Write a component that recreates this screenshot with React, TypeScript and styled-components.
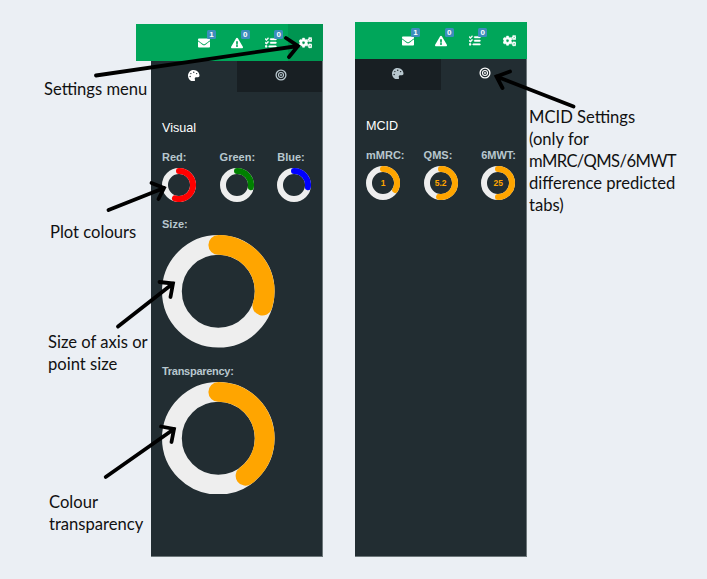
import React from "react";
import styled, { createGlobalStyle } from "styled-components";
import { FaEnvelope, FaExclamationTriangle, FaCogs, FaPalette } from "react-icons/fa";
import { FaListCheck } from "react-icons/fa6";

const GlobalStyle = createGlobalStyle`
  *, *::before, *::after { box-sizing: border-box; }
  body { margin: 0; background: #ebeff4; font-family: "Liberation Sans", Arial, sans-serif; }
`;

const Stage = styled.main`
  position: relative;
  width: 707px;
  height: 579px;
  overflow: hidden;
  display: flex;
  align-items: flex-start;
  gap: 32px;
  padding-left: 136px;
  background: #ebeff4;
`;

const Panel = styled.section<{ $width: number; $top: number }>`
  width: ${(p) => p.$width}px;
  height: ${(p) => 556.5 - p.$top}px;
  margin-top: ${(p) => p.$top}px;
  display: flex;
  flex-direction: column;
  align-items: flex-end;
`;

const Navbar = styled.header<{ $height: number }>`
  width: 100%;
  height: ${(p) => p.$height}px;
  display: flex;
  justify-content: flex-end;
  flex-shrink: 0;
  background: #00a65a;
`;

const NavButton = styled.button<{ $active?: boolean }>`
  position: relative;
  width: ${(p) => (p.$active === undefined ? 33.7 : 35)}px;
  height: 100%;
  padding: 0;
  border: 0;
  display: flex;
  align-items: center;
  justify-content: center;
  color: #fff;
  font-size: 12px;
  background: ${(p) => (p.$active ? "#009551" : "transparent")};
`;

const HeavyIcon = styled.span`
  display: flex;
  svg { stroke: currentColor; stroke-width: 22px; }
`;

const Badge = styled.span`
  position: absolute;
  top: 6px;
  left: 20px;
  width: 9px;
  height: 9px;
  border-radius: 1.5px;
  background: #3c8dbc;
  color: #fff;
  font: bold 8px/9px "Liberation Sans", Arial, sans-serif;
  text-align: center;
`;

const Sidebar = styled.aside`
  width: 172px;
  flex: 1;
  background: #222d32;
  border: solid #6c7679;
  border-width: 0 1px 1px 0;
`;

const Tabs = styled.nav`
  display: grid;
  grid-template-columns: 1fr 1fr;
  height: 31px;
`;

const Tab = styled.button<{ $active: boolean }>`
  padding: 0 0 2px;
  border: 0;
  display: flex;
  align-items: center;
  justify-content: center;
  font-size: 11.5px;
  background: ${(p) => (p.$active ? "#222d32" : "#181f23")};
  color: ${(p) => (p.$active ? "#fff" : "#b8c7ce")};

  &:last-child { padding: 0 0 3px 3px; }
`;

const Content = styled.div`
  padding: 28px 0 0 11px;
`;

const Heading = styled.h3`
  margin: 0;
  color: #fff;
  font-weight: 400;
  font-size: 12.6px;
  line-height: 16px;
`;

const KnobRow = styled.div`
  display: flex;
  margin: 14px 0 15px;
`;

const Field = styled.div<{ $width?: number; $after?: number }>`
  width: ${(p) => (p.$width ? `${p.$width}px` : "auto")};
  margin-bottom: ${(p) => p.$after ?? 0}px;
  flex-shrink: 0;
`;

const FieldLabel = styled.label<{ $spacing?: number }>`
  display: block;
  height: 14px;
  margin-bottom: 4px;
  color: #b8c7ce;
  font-size: 11px;
  font-weight: 700;
  line-height: 14px;
  letter-spacing: ${(p) => p.$spacing ?? 0}px;
  white-space: nowrap;
`;

const Dial = styled.div<{ $size: number }>`
  position: relative;
  width: ${(p) => p.$size}px;
  height: ${(p) => p.$size}px;
  display: grid;
  place-items: center;
  svg { position: absolute; inset: 0; }
`;

const DialValue = styled.span`
  position: relative;
  color: #ffa500;
  font-size: 8.5px;
  font-weight: 700;
  line-height: 10px;
`;

const Note = styled.p<{ $x: number; $y: number }>`
  position: absolute;
  left: ${(p) => p.$x}px;
  top: ${(p) => p.$y}px;
  margin: 0;
  color: #111;
  font-family: Lato, sans-serif;
  font-size: 16.6px;
  line-height: 22px;
  white-space: pre;
`;

const Tight = styled.span`
  letter-spacing: -0.6px;
`;

const ArrowLayer = styled.svg`
  position: absolute;
  inset: 0;
  pointer-events: none;
`;

function Knob({ size, angle, color, value }: { size: number; angle: number; color: string; value?: string }) {
  const stroke = size * 0.176;
  const c = size / 2;
  const r = c - stroke / 2;
  const a = (angle * Math.PI) / 180;
  const endX = c + r * Math.sin(a);
  const endY = c - r * Math.cos(a);
  return (
    <Dial $size={size}>
      <svg width={size} height={size} fill="none" strokeWidth={stroke}>
        <circle cx={c} cy={c} r={r} stroke="#eee" />
        <path
          d={`M${c} ${c - r}A${r} ${r} 0 ${angle > 180 ? 1 : 0} 1 ${endX} ${endY}`}
          stroke={color}
          strokeLinecap="round"
        />
      </svg>
      {value && <DialValue>{value}</DialValue>}
    </Dial>
  );
}

function TargetIcon() {
  return (
    <svg width="12" height="12" viewBox="0 0 12 12" fill="none" stroke="currentColor" strokeWidth="1.3">
      <circle cx="6" cy="6" r="4.9" />
      <circle cx="6" cy="6" r="2.5" strokeWidth="1.1" />
      <circle cx="6" cy="6" r="0.9" fill="currentColor" stroke="none" />
    </svg>
  );
}

function TopBar({ height, settingsOpen }: { height: number; settingsOpen: boolean }) {
  return (
    <Navbar $height={height}>
      <NavButton><FaEnvelope /><Badge>1</Badge></NavButton>
      <NavButton><FaExclamationTriangle /><Badge>0</Badge></NavButton>
      <NavButton><HeavyIcon><FaListCheck size={11.5} /></HeavyIcon><Badge>0</Badge></NavButton>
      <NavButton $active={settingsOpen}><HeavyIcon><FaCogs size={13.5} /></HeavyIcon></NavButton>
    </Navbar>
  );
}

function TabBar({ active }: { active: "visual" | "mcid" }) {
  return (
    <Tabs>
      <Tab $active={active === "visual"}><FaPalette /></Tab>
      <Tab $active={active === "mcid"}><TargetIcon /></Tab>
    </Tabs>
  );
}

type KnobInfo = { label: string; angle: number; color: string; value?: string };

const colourKnobs: KnobInfo[] = [
  { label: "Red:", angle: 197, color: "#ff0000" },
  { label: "Green:", angle: 99, color: "#008000" },
  { label: "Blue:", angle: 99, color: "#0000ff" },
];

const mcidKnobs: KnobInfo[] = [
  { label: "mMRC:", angle: 120, color: "#ffa500", value: "1" },
  { label: "QMS:", angle: 188, color: "#ffa500", value: "5.2" },
  { label: "6MWT:", angle: 180, color: "#ffa500", value: "25" },
];

function SmallKnobs({ items }: { items: KnobInfo[] }) {
  return (
    <KnobRow>
      {items.map((k) => (
        <Field key={k.label} $width={57.6}>
          <FieldLabel>{k.label}</FieldLabel>
          <Knob size={34} angle={k.angle} color={k.color} value={k.value} />
        </Field>
      ))}
    </KnobRow>
  );
}

const arrows = [
  "M96 75.5L298 46M286 38L298 46L289 57",
  "M108.5 210L164 188M151.5 183L164 188L158.5 199",
  "M118 326.5L173 283.5M159.5 282L173 283.5L170.5 297",
  "M105.7 477L174 429M161 426.5L174 429L171.5 442",
  "M573.5 106.5L496.5 76.5M510 71.5L496.5 76.5L502.5 88",
];

export default function App() {
  return (
    <>
      <GlobalStyle />
      <Stage>
        <Panel $width={187} $top={24}>
          <TopBar height={37} settingsOpen />
          <Sidebar>
            <TabBar active="visual" />
            <Content>
              <Heading>Visual</Heading>
              <SmallKnobs items={colourKnobs} />
              <Field $after={16}>
                <FieldLabel>Size:</FieldLabel>
                <Knob size={112.6} angle={108} color="#ffa500" />
              </Field>
              <Field>
                <FieldLabel $spacing={-0.28}>Transparency:</FieldLabel>
                <Knob size={112.6} angle={144} color="#ffa500" />
              </Field>
            </Content>
          </Sidebar>
        </Panel>
        <Panel $width={172} $top={22}>
          <TopBar height={37} settingsOpen={false} />
          <Sidebar>
            <TabBar active="mcid" />
            <Content>
              <Heading>MCID</Heading>
              <SmallKnobs items={mcidKnobs} />
            </Content>
          </Sidebar>
        </Panel>
        <Note $x={44} $y={78}>Settings menu</Note>
        <Note $x={50} $y={221}>Plot colours</Note>
        <Note $x={48} $y={331}>{"Size of axis or\npoint size"}</Note>
        <Note $x={49} $y={491}>{"Colour\ntransparency"}</Note>
        <Note $x={529} $y={106}>
          {"MCID Settings\n(only for\n"}
          <Tight>mMRC/QMS/6MWT</Tight>
          {"\ndifference predicted\ntabs)"}
        </Note>
        <ArrowLayer width="707" height="579" fill="none" stroke="#000" strokeWidth="3.8" strokeLinecap="round">
          {arrows.map((d) => (
            <path key={d} d={d} />
          ))}
        </ArrowLayer>
      </Stage>
    </>
  );
}
